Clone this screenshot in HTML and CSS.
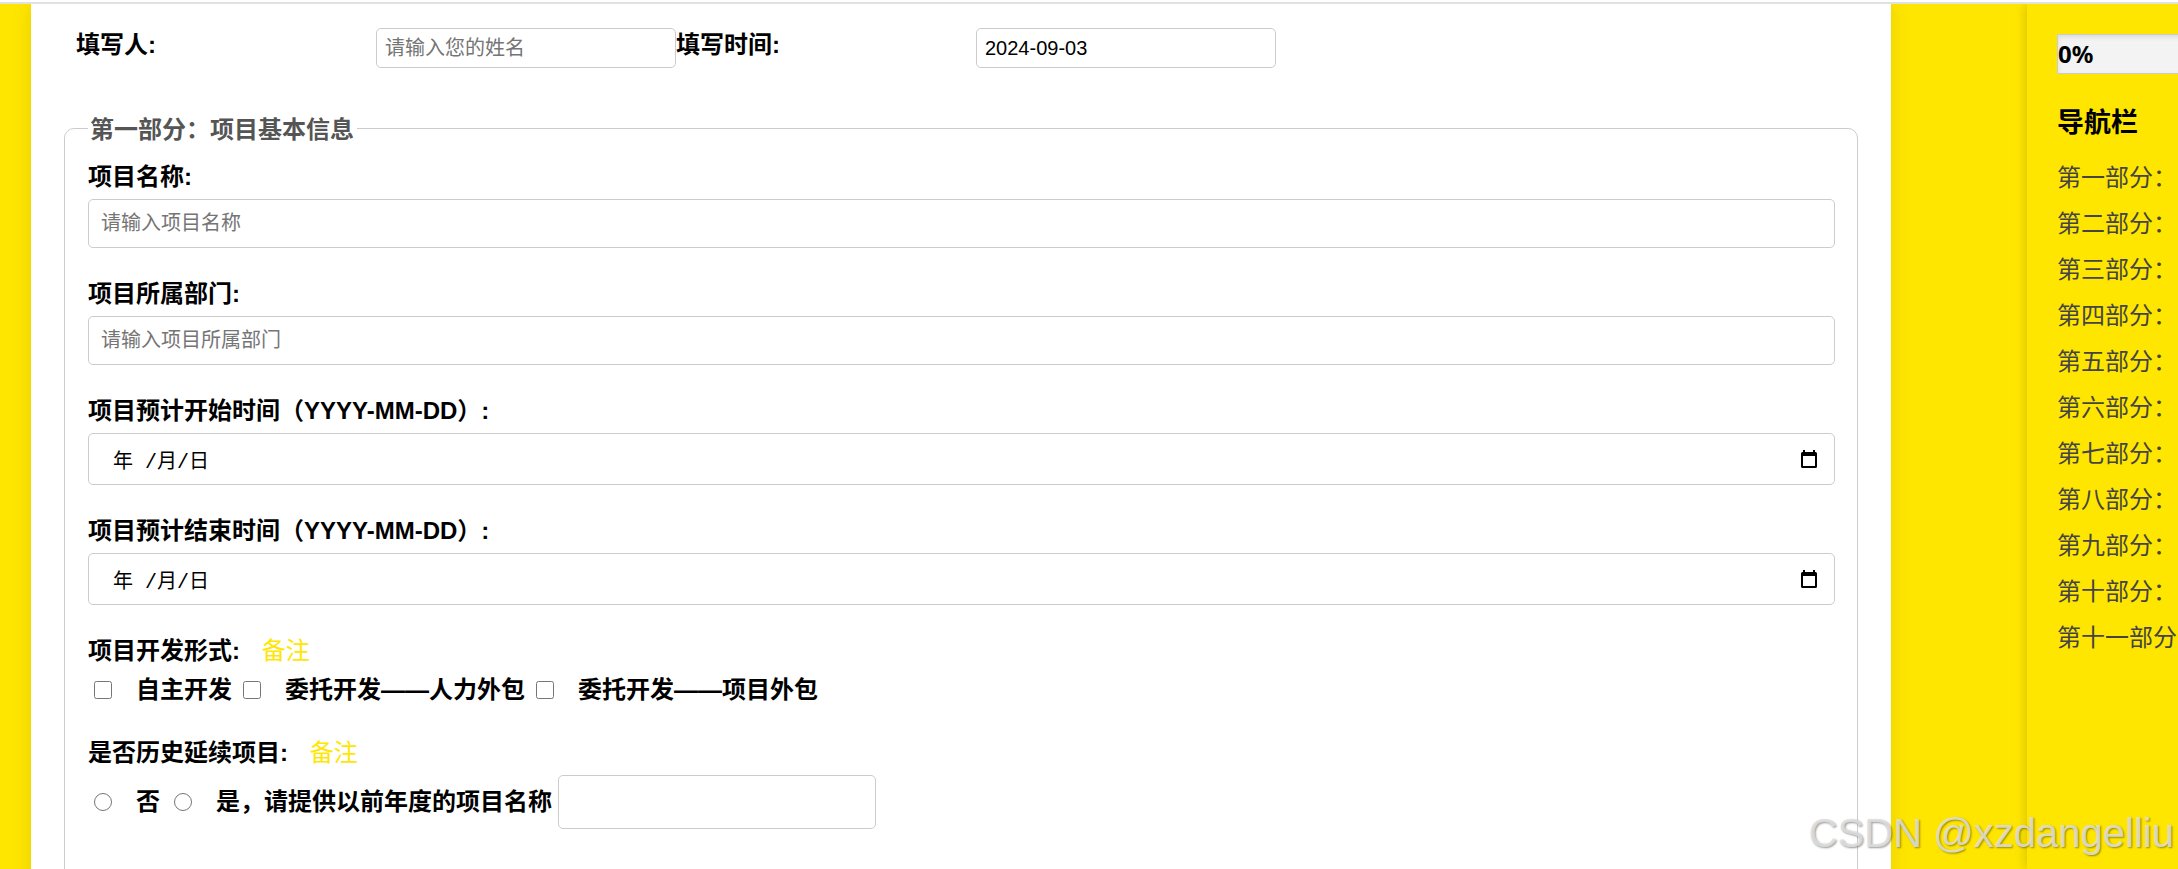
FILE: index.html
```html
<!DOCTYPE html>
<html lang="zh-CN">
<head>
  <meta charset="UTF-8">
  <meta name="viewport" content="width=device-width, initial-scale=1">
  <title>项目信息填写</title>
  <link rel="stylesheet" href="styles.css">
</head>
<body>
  <div class="topbar"></div>

  <div class="page">
    <!-- 表单 -->
    <form class="container">
      <div class="info-row">
        <label for="userName">填写人:</label>
        <input type="text" id="userName" placeholder="请输入您的姓名">
        <label for="fillDate">填写时间:</label>
        <input type="text" id="fillDate" value="2024-09-03">
      </div>

      <fieldset id="part1">
        <legend>第一部分：项目基本信息</legend>

        <div class="form-group">
          <label for="projectName">项目名称:</label>
          <input class="field" type="text" id="projectName" placeholder="请输入项目名称">
        </div>

        <div class="form-group">
          <label for="department">项目所属部门:</label>
          <input class="field" type="text" id="department" placeholder="请输入项目所属部门">
        </div>

        <div class="form-group">
          <label for="startDate">项目预计开始时间（YYYY-MM-DD）:</label>
          <div class="date-box">
            <input type="text" id="startDate" value="年 /月/日">
            <button type="button" aria-label="选择开始日期">
              <svg width="16" height="18" viewBox="0 0 16 18"><path d="M2 0h2v2h8V0h2v2h.5q1.500 0 1.500 1.500v13q0 1.500-1.500 1.500h-13Q0 18 0 16.500v-13Q0 2 1.500 2H2zM2 6v10h12V6z" fill-rule="evenodd"/></svg>
            </button>
          </div>
        </div>

        <div class="form-group">
          <label for="endDate">项目预计结束时间（YYYY-MM-DD）:</label>
          <div class="date-box">
            <input type="text" id="endDate" value="年 /月/日">
            <button type="button" aria-label="选择结束日期">
              <svg width="16" height="18" viewBox="0 0 16 18"><path d="M2 0h2v2h8V0h2v2h.5q1.500 0 1.500 1.500v13q0 1.500-1.500 1.500h-13Q0 18 0 16.500v-13Q0 2 1.500 2H2zM2 6v10h12V6z" fill-rule="evenodd"/></svg>
            </button>
          </div>
        </div>

        <div class="form-group">
          <div class="group-title">项目开发形式: <a class="note" href="#part1">备注</a></div>
          <div class="choices">
            <label><input type="checkbox" name="devType">自主开发</label>
            <label><input type="checkbox" name="devType">委托开发——人力外包</label>
            <label><input type="checkbox" name="devType">委托开发——项目外包</label>
          </div>
        </div>

        <div class="form-group">
          <div class="group-title">是否历史延续项目: <a class="note" href="#part1">备注</a></div>
          <div class="choices radios">
            <label><input type="radio" name="history">否</label>
            <label><input type="radio" name="history">是，请提供以前年度的项目名称</label>
            <input class="history-name" type="text" aria-label="以前年度的项目名称">
          </div>
        </div>
      </fieldset>
    </form>

    <!-- 导航栏 -->
    <aside class="sidebar">
      <div class="progress">0%</div>
      <h3>导航栏</h3>
      <nav>
        <a href="#part1">第一部分：</a>
        <a href="#part2">第二部分：</a>
        <a href="#part3">第三部分：</a>
        <a href="#part4">第四部分：</a>
        <a href="#part5">第五部分：</a>
        <a href="#part6">第六部分：</a>
        <a href="#part7">第七部分：</a>
        <a href="#part8">第八部分：</a>
        <a href="#part9">第九部分：</a>
        <a href="#part10">第十部分：</a>
        <a href="#part11">第十一部分</a>
      </nav>
    </aside>
  </div>

  <div class="watermark">CSDN @xzdangelliu</div>
</body>
</html>
```

FILE: styles.css
```css
* {
  box-sizing: border-box;
}

body {
  margin: 0;
  height: 100vh;
  display: flex;
  flex-direction: column;
  position: relative;
  overflow: hidden;
  background: #ffe600;
  color: #000;
  font-family: "Liberation Sans", "Noto Sans CJK SC", sans-serif;
  font-size: 24px;
}

input {
  font-family: inherit;
  font-size: 20px;
  color: #000;
}

input::placeholder {
  color: #757575;
}

input[type="text"] {
  border: 1px solid #ccc;
  border-radius: 5px;
  background: #fff;
}

.topbar {
  flex: none;
  height: 4px;
  background: #fff;
  border-bottom: 2px solid #e1e1e1;
}

.page {
  flex: 1;
  min-height: 0;
  display: flex;
  gap: 136px;
  padding-left: 31px;
  overflow: hidden;
}

/* 表单区域 */
.container {
  flex: 1;
  min-width: 0;
  height: max-content;
  padding: 24px 33px 40px;
  background: #fff;
  box-shadow: 0 0 20px rgba(0, 0, 0, 0.1);
}

.info-row {
  display: grid;
  grid-template-columns: repeat(4, 300px);
  margin: 0 0 42px 12px;
  font-weight: bold;
}

.info-row label {
  line-height: 34px;
}

.info-row input {
  height: 40px;
  padding: 0 8px;
}

fieldset {
  margin: 0;
  min-width: 0;
  padding: 13px 22px 60px 23px;
  border: 1px solid #ccc;
  border-radius: 10px;
}

legend {
  padding: 4px 3px 0 2px;
  line-height: 32px;
  font-weight: bold;
  color: #555;
}

.form-group {
  margin-bottom: 28px;
  font-weight: bold;
}

.form-group > label,
.group-title {
  display: block;
  margin-bottom: 4px;
  line-height: 36px;
}

.field {
  display: block;
  width: 100%;
  height: 49px;
  padding: 0 12px;
}

.date-box {
  height: 52px;
  display: flex;
  align-items: center;
  border: 1px solid #ccc;
  border-radius: 5px;
}

.date-box input[type="text"] {
  flex: 1;
  min-width: 0;
  height: 50px;
  padding: 0 24px;
  border: none;
  background: none;
  font-family: "Liberation Mono", "Noto Sans CJK SC", monospace;
}

.date-box button {
  display: flex;
  margin-right: 17px;
  padding: 0;
  border: none;
  background: none;
  cursor: pointer;
}

.note {
  margin-left: 15px;
  color: #ffe600;
  font-weight: normal;
  text-decoration: none;
}

/* 单选 / 多选 */
.choices {
  display: flex;
  align-items: center;
  gap: 11px;
  min-height: 34px;
  padding-left: 6px;
  line-height: 34px;
}

.choices label {
  display: flex;
  align-items: center;
}

.choices input[type="checkbox"],
.choices input[type="radio"] {
  width: 18px;
  height: 18px;
  margin: 0 24px 0 0;
}

.radios {
  gap: 14px;
}

.choices .history-name {
  width: 318px;
  height: 54px;
  margin-left: -8px;
  padding: 0 12px;
}

/* 右侧导航 */
.sidebar {
  flex: 0 0 300px;
  min-width: 0;
  margin-right: -149px;
  padding: 30px;
  box-shadow: -2px 0 10px rgba(0, 0, 0, 0.15);
  white-space: nowrap;
}

.progress {
  height: 40px;
  border: 1px solid #ccc;
  background: #f3f3f3;
  box-shadow: inset 0 2px 5px rgba(0, 0, 0, 0.1);
  font-family: "Noto Sans", sans-serif;
  font-weight: bold;
  line-height: 38px;
}

.sidebar h3 {
  margin: 29px 0 12px;
  font-size: 27px;
  line-height: 40px;
}

.sidebar nav {
  display: flex;
  flex-direction: column;
}

.sidebar nav a {
  color: #444;
  line-height: 46px;
  text-decoration: none;
}

.watermark {
  position: absolute;
  right: 4px;
  bottom: 12px;
  color: rgba(225, 225, 225, 0.85);
  font-size: 40px;
  line-height: 48px;
  text-shadow: 1px 1px 2px rgba(0, 0, 0, 0.4);
  pointer-events: none;
}
```
